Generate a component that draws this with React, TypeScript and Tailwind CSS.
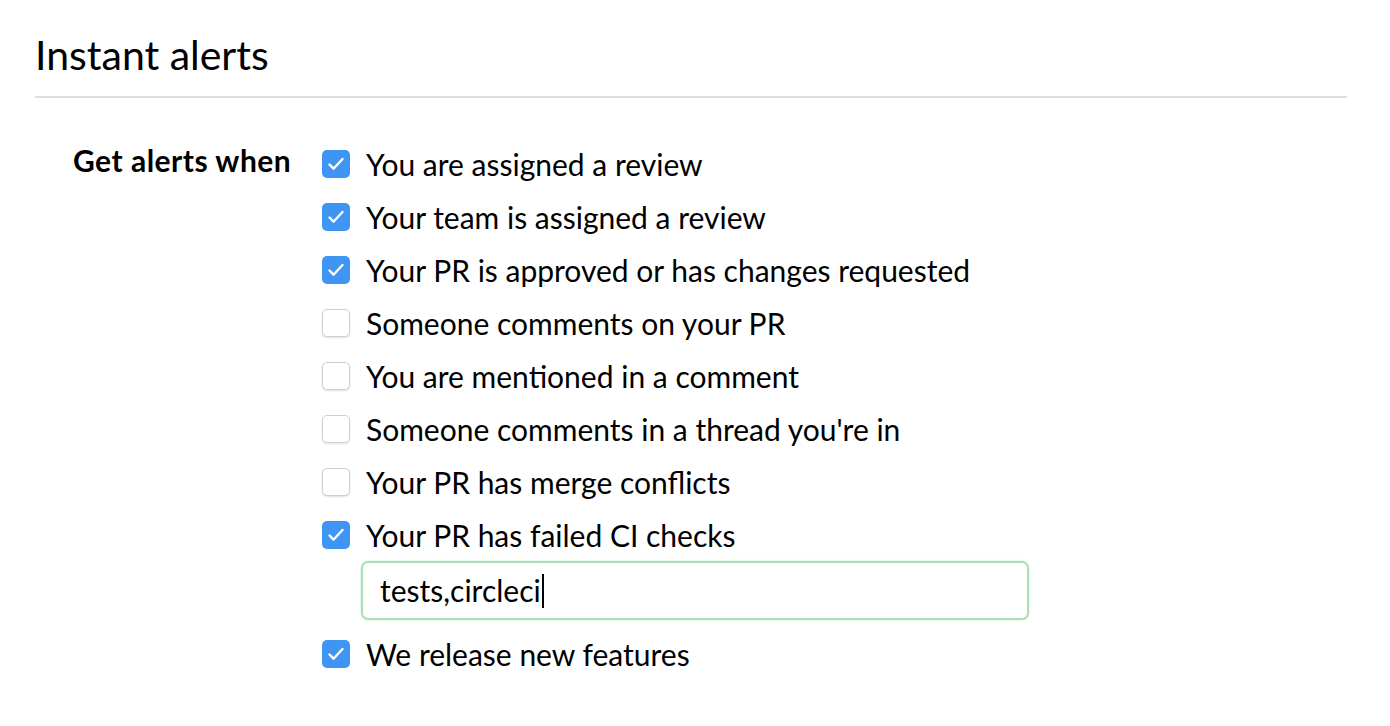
import { useState } from "react";

const options = [
  { label: "You are assigned a review", checked: true },
  { label: "Your team is assigned a review", checked: true },
  { label: "Your PR is approved or has changes requested", checked: true },
  { label: "Someone comments on your PR", checked: false },
  { label: "You are mentioned in a comment", checked: false },
  { label: "Someone comments in a thread you're in", checked: false },
  { label: "Your PR has merge conflicts", checked: false },
  { label: "Your PR has failed CI checks", checked: true, input: true },
  { label: "We release new features", checked: true },
];

function Box({ checked }: { checked: boolean }) {
  if (checked) {
    return (
      <span className="flex h-[28px] w-[28px] shrink-0 rounded-[5px] bg-[#3e95f3]">
        <svg width="28" height="28" viewBox="0 0 28 28" fill="none">
          <path d="M7.5 14.5l4 4.2L20.5 9" stroke="white" strokeWidth="2.4" strokeLinecap="round" strokeLinejoin="round" />
        </svg>
      </span>
    );
  }
  return (
    <span className="h-[28px] w-[28px] shrink-0 rounded-[5px] border border-[#cfcfcf] bg-white shadow-[0_1px_2px_rgba(0,0,0,0.12)]" />
  );
}

export default function App() {
  const [checks, setChecks] = useState(options.map(o => o.checked));

  return (
    <div className="min-h-screen bg-white px-[35px] pt-[30px] text-black" style={{ fontFamily: "Lato, 'Open Sans', sans-serif" }}>
      <h1 className="pb-[16px] text-[41px] leading-[50px] font-normal">Instant alerts</h1>
      <div className="mr-[8px] h-[2px] bg-[#dedede]" />

      <div className="mt-[39px] flex">
        <div className="w-[287px] shrink-0 pl-[38px] text-[30px] font-bold tracking-[0.5px] leading-[46px]">Get alerts when</div>
        <div className="flex flex-col">
          {options.map((o, i) => (
            <div key={o.label}>
              <label className="flex h-[53px] cursor-pointer items-center gap-[16px]" onClick={() => setChecks(c => c.map((v, j) => (j === i ? !v : v)))}>
                <Box checked={checks[i]} />
                <span className="text-[30px] leading-none">{o.label}</span>
              </label>
              {o.input && (
                <div className="mb-[7px] pl-[39px]">
                  <div className="flex h-[59px] w-[668px] items-center rounded-[7px] border-2 border-[#abdfb5] px-[17px] text-[30px] shadow-[0_0_2px_rgba(120,200,140,0.5)]">
                    <span>tests,circleci</span>
                    <span className="ml-[1px] h-[34px] w-[2px] bg-black" />
                  </div>
                </div>
              )}
            </div>
          ))}
        </div>
      </div>
    </div>
  );
}
